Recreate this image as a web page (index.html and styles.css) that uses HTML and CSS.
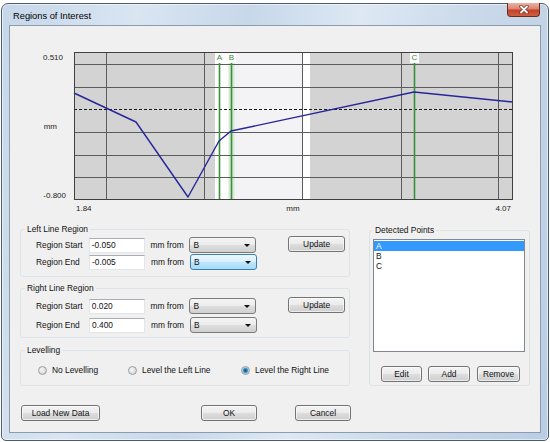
FILE: index.html
```html
<!DOCTYPE html>
<html>
<head>
    <title>Regions of Interest</title>
    <link rel="stylesheet" href="styles.css">
</head>
<body>
    <div class="window">
        <div class="titlebar">
            <span class="title">Regions of Interest</span>
            <span class="close">
                <svg width="12" height="9" viewBox="0 0 12 9">
                    <path d="M3 1.5 L9 7.5 M9 1.5 L3 7.5" stroke="#7a3326" stroke-width="3.4" stroke-linecap="round"/>
                    <path d="M3 1.5 L9 7.5 M9 1.5 L3 7.5" stroke="#ffffff" stroke-width="1.8" stroke-linecap="round"/>
                </svg>
            </span>
        </div>

        <div class="client">
            <!-- chart uses page coordinates through the viewBox -->
            <svg class="chart" width="530" height="198" viewBox="10 26 530 198">
                <rect x="74" y="52" width="141" height="148" fill="#d3d3d3"/>
                <rect x="215" y="52" width="17" height="148" fill="#ffffff"/>
                <rect x="232" y="52" width="71" height="148" fill="#f3f3f5"/>
                <rect x="303" y="52" width="7" height="148" fill="#ffffff"/>
                <rect x="310" y="52" width="203" height="148" fill="#d3d3d3"/>
                <rect x="228.5" y="52" width="6" height="148" fill="#d4e8d4"/>

                <g stroke="#5c5c5c" stroke-width="1">
                    <line x1="74" y1="64.5" x2="513" y2="64.5"/>
                    <line x1="74" y1="87.5" x2="513" y2="87.5"/>
                    <line x1="74" y1="132.5" x2="513" y2="132.5"/>
                    <line x1="74" y1="155.5" x2="513" y2="155.5"/>
                    <line x1="74" y1="177.5" x2="513" y2="177.5"/>
                    <line x1="106.5" y1="52" x2="106.5" y2="200"/>
                    <line x1="204.5" y1="52" x2="204.5" y2="200"/>
                    <line x1="302.5" y1="52" x2="302.5" y2="200"/>
                    <line x1="401.5" y1="52" x2="401.5" y2="200"/>
                    <line x1="498.5" y1="52" x2="498.5" y2="200"/>
                </g>
                <line x1="74" y1="109.5" x2="513" y2="109.5" stroke="#1a1a1a" stroke-dasharray="3 2"/>

                <rect x="215" y="52" width="9" height="11" fill="#ffffff"/>
                <rect x="227" y="52" width="9" height="11" fill="#ffffff"/>
                <rect x="410" y="52" width="9" height="11" fill="#ffffff"/>

                <g stroke="#3b8f3b" stroke-width="1.6">
                    <line x1="219.5" y1="63" x2="219.5" y2="200"/>
                    <line x1="231.5" y1="63" x2="231.5" y2="200"/>
                    <line x1="414.5" y1="63" x2="414.5" y2="200"/>
                </g>
                <g class="marker" text-anchor="middle">
                    <text x="219.5" y="60">A</text>
                    <text x="231.5" y="60">B</text>
                    <text x="414.5" y="60">C</text>
                </g>

                <polyline points="74,93 136,122 188,197 219,141 231,131 414,92 513,102"
                    fill="none" stroke="#26269a" stroke-width="1.4" stroke-linejoin="round"/>
                <rect x="74.5" y="52.5" width="438" height="147" fill="none" stroke="#404040"/>

                <g class="axis">
                    <text x="63" y="60" text-anchor="end">0.510</text>
                    <text x="57" y="129" text-anchor="end">mm</text>
                    <text x="66" y="198" text-anchor="end">-0.800</text>
                    <text x="76" y="211">1.84</text>
                    <text x="293" y="211" text-anchor="middle">mm</text>
                    <text x="511" y="211" text-anchor="end">4.07</text>
                </g>
            </svg>

            <div class="middle">
                <div class="left-col">
                    <fieldset class="group g-left">
                        <legend>Left Line Region</legend>
                        <div class="rows rows-tight">
                            <div class="row">
                                <span class="lbl">Region Start</span>
                                <span class="txt">-0.050</span>
                                <span class="unit">mm from</span>
                                <span class="combo">B<span class="arrow"></span></span>
                                <span class="btn upd">Update</span>
                            </div>
                            <div class="row">
                                <span class="lbl">Region End</span>
                                <span class="txt">-0.005</span>
                                <span class="unit">mm from</span>
                                <span class="combo hot">B<span class="arrow"></span></span>
                            </div>
                        </div>
                    </fieldset>

                    <fieldset class="group g-right">
                        <legend>Right Line Region</legend>
                        <div class="rows rows-loose">
                            <div class="row">
                                <span class="lbl">Region Start</span>
                                <span class="txt">0.020</span>
                                <span class="unit">mm from</span>
                                <span class="combo">B<span class="arrow"></span></span>
                                <span class="btn upd">Update</span>
                            </div>
                            <div class="row">
                                <span class="lbl">Region End</span>
                                <span class="txt">0.400</span>
                                <span class="unit">mm from</span>
                                <span class="combo">B<span class="arrow"></span></span>
                            </div>
                        </div>
                    </fieldset>

                    <fieldset class="group g-level">
                        <legend>Levelling</legend>
                        <div class="radios">
                            <span class="radio"><span class="dot"></span>No Levelling</span>
                            <span class="radio"><span class="dot"></span>Level the Left Line</span>
                            <span class="radio"><span class="dot on"></span>Level the Right Line</span>
                        </div>
                    </fieldset>
                </div>

                <fieldset class="group detected">
                    <legend>Detected Points</legend>
                    <div class="listbox">
                        <div class="item selected">A</div>
                        <div class="item">B</div>
                        <div class="item">C</div>
                    </div>
                    <div class="list-buttons">
                        <span class="btn b-edit">Edit</span>
                        <span class="btn b-add">Add</span>
                        <span class="btn b-remove">Remove</span>
                    </div>
                </fieldset>
            </div>

            <div class="bottom">
                <span class="btn b-load">Load New Data</span>
                <span class="btn b-ok">OK</span>
                <span class="btn b-cancel">Cancel</span>
            </div>
        </div>
    </div>
</body>
</html>
```

FILE: styles.css
```css
html, body {
    margin: 0;
    padding: 0;
    background-color: #ffffff;
}
body {
    font-family: "Liberation Sans", Arial, sans-serif;
    font-size: 8.4px;
    color: #111;
    width: 550px;
    height: 442px;
    overflow: hidden;
}
.window {
    box-sizing: border-box;
    margin: 3px 0 0 1px;
    width: 548px;
    height: 438px;
    padding: 0 7px 7px;
    border: 1px solid #4e5d6e;
    border-radius: 7px 7px 5px 5px;
    background: linear-gradient(100deg, #c6d7ea 0%, #d9e5f1 22%, #c7d8ea 40%, #dde8f3 58%, #cbdaea 75%, #b9cde3 100%);
    box-shadow: inset 0 0 0 1px rgba(255,255,255,0.55);
}
.titlebar {
    height: 21px;
    display: flex;
    align-items: center;
    justify-content: space-between;
}
.title {
    font-size: 9.3px;
    color: #000;
    margin-left: 4px;
    margin-top: 2px;
}
.close {
    align-self: flex-start;
    margin-top: -1px;
    margin-right: 1px;
    width: 33px;
    height: 14px;
    box-sizing: border-box;
    border: 1px solid #6e2b20;
    border-top: none;
    border-radius: 0 0 4px 4px;
    background: linear-gradient(#eab3a5 0%, #dc8470 45%, #c2412b 55%, #d2603f 100%);
    display: flex;
    align-items: center;
    justify-content: center;
}
.close svg {
    display: block;
}
.client {
    box-sizing: border-box;
    height: 408px;
    border: 1px solid #8c9bad;
    background-color: #f0f0f0;
}
.chart {
    display: block;
}
.chart .marker text {
    font-family: "Liberation Sans", Arial, sans-serif;
    font-size: 8px;
    fill: #3a8a3a;
}
.chart .axis text {
    font-family: "Liberation Sans", Arial, sans-serif;
    font-size: 8px;
    fill: #222;
}

.middle {
    display: flex;
    align-items: flex-start;
    padding-left: 10px;
}
.left-col {
    width: 330px;
}
.group {
    box-sizing: border-box;
    margin: 0;
    min-width: 0;
    border: 1px solid #dde2e7;
    border-radius: 3px;
}
.group legend {
    padding: 0 2px;
    line-height: 10px;
    color: #111;
}
.g-left {
    padding: 3px 4px 6px;
}
.g-right {
    margin-top: 6px;
    padding: 5px 4px 4px;
}
.g-level {
    margin-top: 7px;
    padding: 9px 4px 9px;
}
.rows {
    display: flex;
    flex-direction: column;
    padding-left: 11px;
}
.rows-tight {
    gap: 1px;
}
.rows-loose {
    gap: 3px;
}
.row {
    display: flex;
    align-items: center;
    height: 16px;
}
.lbl {
    width: 53px;
}
.txt {
    box-sizing: border-box;
    width: 56px;
    height: 15px;
    line-height: 13px;
    padding-left: 2px;
    background-color: #fff;
    border: 1px solid #e2e6ea;
    border-top-color: #abadb3;
}
.unit {
    width: 39px;
    margin-left: 6px;
}
.combo {
    box-sizing: border-box;
    position: relative;
    width: 67px;
    height: 16px;
    line-height: 14px;
    padding-left: 3px;
    border: 1px solid #7a7a7a;
    border-radius: 3px;
    background: linear-gradient(#f4f4f4 0%, #ececec 48%, #dedede 52%, #d0d0d0 100%);
}
.combo.hot {
    border-color: #3c7fb1;
    background: linear-gradient(#eaf6fd 0%, #d9f0fc 48%, #bee6fd 52%, #a7d9f5 100%);
}
.arrow {
    position: absolute;
    right: 5px;
    top: 6px;
    width: 0;
    height: 0;
    border-left: 3px solid transparent;
    border-right: 3px solid transparent;
    border-top: 3px solid #111;
}
.btn {
    box-sizing: border-box;
    display: inline-flex;
    align-items: center;
    justify-content: center;
    height: 16px;
    border: 1px solid #737373;
    border-radius: 3px;
    background: linear-gradient(#f4f4f4 0%, #ebebeb 48%, #dddddd 52%, #cfcfcf 100%);
    box-shadow: inset 0 0 0 1px rgba(255,255,255,0.6);
    color: #111;
}
.upd {
    width: 57px;
    margin-left: 32px;
    margin-top: -2px;
}
.radios {
    display: grid;
    grid-template-columns: 90px 113px auto;
    padding-left: 13px;
    height: 12px;
    align-items: center;
}
.radio {
    display: flex;
    align-items: center;
}
.dot {
    box-sizing: border-box;
    width: 9px;
    height: 9px;
    margin-right: 5px;
    border: 1px solid #9a9c9e;
    border-radius: 50%;
    background: radial-gradient(circle at 40% 40%, #f8f8f8 0, #e2e2e2 3px, #cfd0d1 5px);
}
.dot.on {
    background: radial-gradient(circle at center, #154f78 0, #2b84b8 1.8px, #9fd0ee 3px, #e8e8e8 4.5px);
}

.detected {
    margin: 1px 0 0 19px;
    width: 161px;
    padding: 4px 4px 3px 3px;
}
.listbox {
    box-sizing: border-box;
    height: 113px;
    border: 1px solid #828790;
    background-color: #fff;
    padding-top: 1px;
}
.item {
    line-height: 10px;
    padding-left: 2px;
}
.item.selected {
    background-color: #3399ff;
    color: #fff;
}
.list-buttons {
    display: flex;
    margin-top: 14px;
    padding-left: 8px;
}
.b-edit {
    width: 41px;
}
.b-add {
    width: 42px;
    margin-left: 6px;
}
.b-remove {
    width: 43px;
    margin-left: 7px;
}

.bottom {
    display: flex;
    margin-top: 19px;
    padding-left: 11px;
}
.b-load {
    width: 79px;
}
.b-ok {
    width: 56px;
    margin-left: 101px;
}
.b-cancel {
    width: 56px;
    margin-left: 38px;
}
```
